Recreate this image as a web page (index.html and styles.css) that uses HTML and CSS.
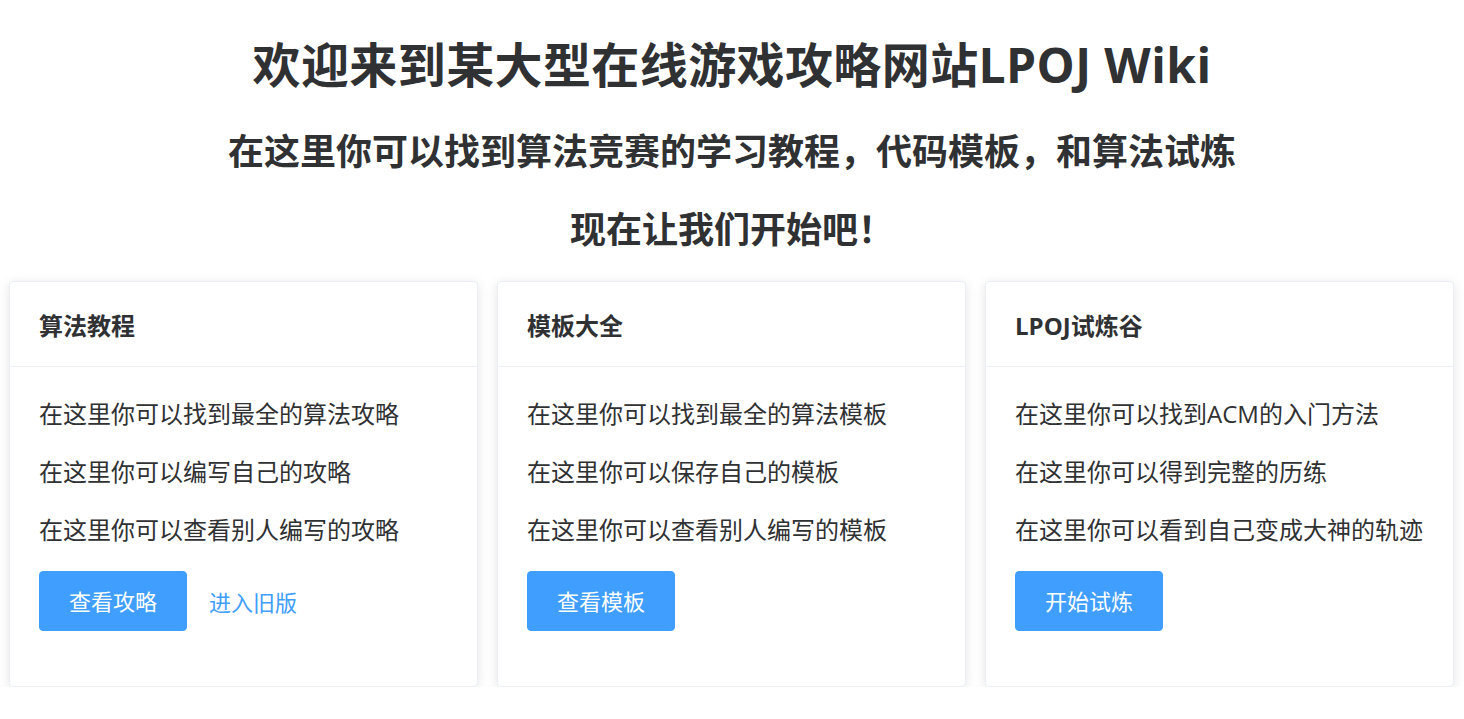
FILE: index.html
```html
<!DOCTYPE html>
<html lang="zh-CN">
<head>
<meta charset="utf-8">
<title>LPOJ Wiki</title>
<link rel="stylesheet" href="styles.css">
</head>
<body>
<div class="page">
  <header class="hero">
    <h1 class="hero-title">欢迎来到某大型在线游戏攻略网站LPOJ Wiki</h1>
    <h2 class="hero-sub">在这里你可以找到算法竞赛的学习教程，代码模板，和算法试炼</h2>
    <h2 class="hero-sub hero-sub-last">现在让我们开始吧！</h2>
  </header>
  <section class="cards">
    <div class="card">
      <div class="card-header">算法教程</div>
      <div class="card-body">
        <p class="line">在这里你可以找到最全的算法攻略</p>
        <p class="line">在这里你可以编写自己的攻略</p>
        <p class="line">在这里你可以查看别人编写的攻略</p>
        <div class="actions">
          <button class="btn">查看攻略</button>
          <a class="link">进入旧版</a>
        </div>
      </div>
    </div>
    <div class="card">
      <div class="card-header">模板大全</div>
      <div class="card-body">
        <p class="line">在这里你可以找到最全的算法模板</p>
        <p class="line">在这里你可以保存自己的模板</p>
        <p class="line">在这里你可以查看别人编写的模板</p>
        <div class="actions">
          <button class="btn">查看模板</button>
        </div>
      </div>
    </div>
    <div class="card">
      <div class="card-header">LPOJ试炼谷</div>
      <div class="card-body">
        <p class="line">在这里你可以找到ACM的入门方法</p>
        <p class="line">在这里你可以得到完整的历练</p>
        <p class="line">在这里你可以看到自己变成大神的轨迹</p>
        <div class="actions">
          <button class="btn">开始试炼</button>
        </div>
      </div>
    </div>
  </section>
</div>
</body>
</html>
```
FILE: styles.css
```css
* { box-sizing: border-box; }
html, body {
  margin: 0;
  padding: 0;
  background: #ffffff;
}
body {
  font-family: "Open Sans", "Noto Sans CJK SC", sans-serif;
  color: #303133;
}
.page {
  padding: 35px 0 0;
}
.hero {
  text-align: center;
}
.hero-title {
  margin: 0;
  font-size: 48px;
  line-height: 60px;
  font-weight: 700;
  letter-spacing: 0.4px;
}
.hero-sub {
  margin: 32px 0 0;
  font-size: 36px;
  line-height: 50px;
  font-weight: 700;
}
.hero-sub-last {
  margin-top: 28px;
}
.cards {
  display: grid;
  grid-template-columns: repeat(3, 1fr);
  gap: 19px;
  padding: 0 10px 0 9px;
  margin-top: 26px;
}
.card {
  background: #fff;
  border: 1px solid #EBEEF5;
  border-radius: 4px;
  box-shadow: 0 2px 12px 0 rgba(0, 0, 0, 0.1);
  overflow: hidden;
}
.card-header {
  padding: 32px 29px 28px;
  font-size: 24px;
  line-height: 24px;
  font-weight: 700;
  border-bottom: 1px solid #EBEEF5;
}
.card-body {
  padding: 30px 29px;
}
.line {
  margin: 0 0 24px;
  font-size: 24px;
  line-height: 34px;
  white-space: nowrap;
}
.actions {
  display: flex;
  align-items: center;
  margin-top: 3px;
  margin-bottom: 25px;
}
.btn {
  height: 60px;
  padding: 0 29px;
  border: 1px solid #409EFF;
  border-radius: 4px;
  background: #409EFF;
  color: #fff;
  font-family: inherit;
  font-size: 22px;
  line-height: 1;
  cursor: pointer;
}
.link {
  margin-left: 22px;
  color: #409EFF;
  font-size: 22px;
  cursor: pointer;
}
```
